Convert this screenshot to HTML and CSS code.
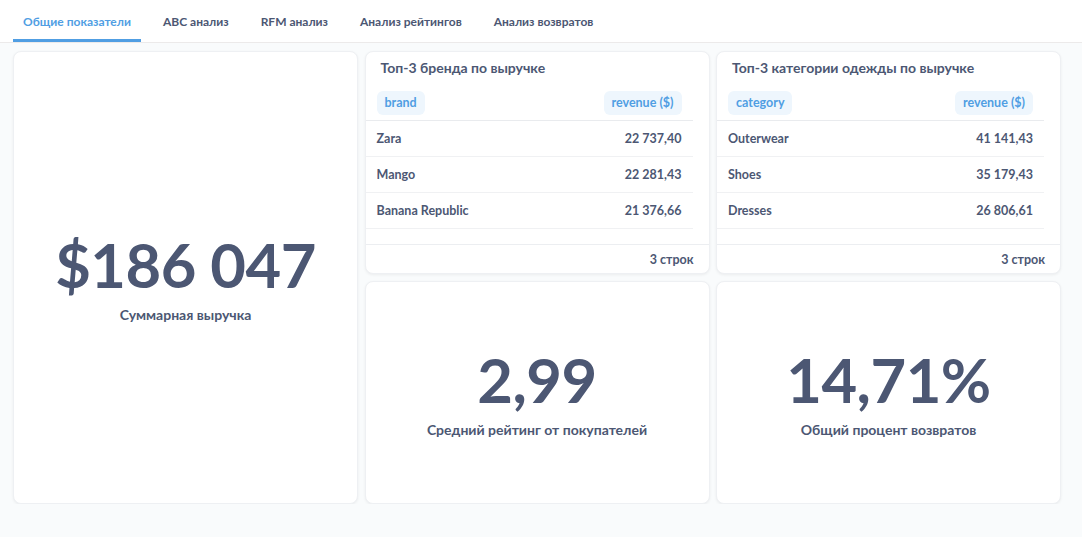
FILE: index.html
```html
<!DOCTYPE html>
<html lang="ru">
<head>
<meta charset="utf-8">
<title>Dashboard</title>
<link rel="stylesheet" href="styles.css">
</head>
<body>
<nav class="tabs">
  <div class="tab active">Общие показатели</div>
  <div class="tab">ABC анализ</div>
  <div class="tab">RFM анализ</div>
  <div class="tab">Анализ рейтингов</div>
  <div class="tab">Анализ возвратов</div>
</nav>
<main class="grid">
  <section class="card scalar tall">
    <div class="value">$186 047</div>
    <div class="label">Суммарная выручка</div>
  </section>
  <section class="card table-card">
    <div class="card-title">Топ-3 бренда по выручке</div>
    <div class="table-wrap">
      <div class="row head">
        <span class="pill">brand</span>
        <span class="pill">revenue ($)</span>
      </div>
      <div class="row"><span>Zara</span><span>22 737,40</span></div>
      <div class="row"><span>Mango</span><span>22 281,43</span></div>
      <div class="row"><span>Banana Republic</span><span>21 376,66</span></div>
    </div>
    <div class="footer">3 строк</div>
  </section>
  <section class="card table-card">
    <div class="card-title">Топ-3 категории одежды по выручке</div>
    <div class="table-wrap">
      <div class="row head">
        <span class="pill">category</span>
        <span class="pill">revenue ($)</span>
      </div>
      <div class="row"><span>Outerwear</span><span>41 141,43</span></div>
      <div class="row"><span>Shoes</span><span>35 179,43</span></div>
      <div class="row"><span>Dresses</span><span>26 806,61</span></div>
    </div>
    <div class="footer">3 строк</div>
  </section>
  <section class="card scalar">
    <div class="value">2,99</div>
    <div class="label">Средний рейтинг от покупателей</div>
  </section>
  <section class="card scalar">
    <div class="value">14,71%</div>
    <div class="label">Общий процент возвратов</div>
  </section>
</main>
</body>
</html>
```

FILE: styles.css
```css
* { box-sizing: border-box; }
html, body {
  margin: 0;
  padding: 0;
  background: #f9fbfc;
  font-family: Lato, "Noto Sans", sans-serif;
  color: #4c5773;
}
.tabs {
  display: flex;
  height: 43px;
  padding-left: 13px;
  gap: 12px;
  background: #fff;
  border-bottom: 1px solid #eceaea;
}
.tab {
  padding: 3px 10px 0;
  height: 42px;
  display: flex;
  align-items: center;
  font-size: 12px;
  font-weight: 700;
  color: #4c5773;
  border-bottom: 3px solid transparent;
}
.tab.active {
  color: #509ee3;
  border-bottom-color: #509ee3;
}
.grid {
  display: grid;
  grid-template-columns: repeat(3, 345px);
  grid-template-rows: 223px 223px;
  column-gap: 6.5px;
  row-gap: 7px;
  padding: 8px 0 0 13px;
}
.card {
  background: #fff;
  border: 1px solid #eef0f3;
  border-radius: 8px;
  box-shadow: 0 1px 3px rgba(0, 0, 0, 0.06);
  overflow: hidden;
}
.tall { grid-row: span 2; }
.scalar {
  display: flex;
  flex-direction: column;
  align-items: center;
  justify-content: center;
}
.value {
  font-size: 61.5px;
  font-weight: 700;
  line-height: 64px;
  letter-spacing: -0.5px;
}
.label {
  margin-top: 10px;
  font-size: 14px;
  font-weight: 700;
  line-height: 18px;
}
.table-card {
  display: flex;
  flex-direction: column;
}
.card-title {
  height: 33px;
  padding: 6px 15px 0;
  font-size: 14px;
  font-weight: 700;
  line-height: 20px;
}
.table-wrap {
  flex: 1;
  margin-right: 16px;
}
.row {
  display: flex;
  justify-content: space-between;
  align-items: center;
  height: 36px;
  padding: 0 11px;
  border-bottom: 1px solid #f0f1f3;
  font-size: 12.5px;
  font-weight: 700;
}
.row.head { border-bottom: 1px solid #e9ebee; }
.pill {
  background: #eef6fd;
  color: #509ee3;
  border-radius: 6px;
  height: 24px;
  line-height: 24px;
  padding: 0 8px;
}
.footer {
  height: 29px;
  border-top: 1px solid #eceef1;
  display: flex;
  align-items: center;
  justify-content: flex-end;
  padding-right: 15px;
  font-size: 12.5px;
  font-weight: 700;
}
```
